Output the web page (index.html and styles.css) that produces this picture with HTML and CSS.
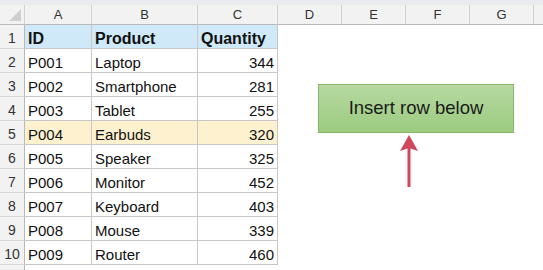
FILE: index.html
```html
<!DOCTYPE html>
<html>
<head>
<meta charset="utf-8">
<link rel="stylesheet" href="styles.css">
</head>
<body>
<div class="sheet">
  <div class="topstrip"></div>
  <div class="grid">
    <div class="ch corner"><span class="tri"></span></div>
    <div class="ch">A</div><div class="ch">B</div><div class="ch">C</div><div class="ch">D</div><div class="ch">E</div><div class="ch">F</div><div class="ch">G</div><div class="ch last"></div>

    <div class="rh">1</div><div class="c t hd b">ID</div><div class="c t hd b">Product</div><div class="c t hd b">Quantity</div><div class="c"></div><div class="c"></div><div class="c"></div><div class="c"></div><div class="c"></div>
    <div class="rh">2</div><div class="c t">P001</div><div class="c t">Laptop</div><div class="c t n">344</div><div class="c"></div><div class="c"></div><div class="c"></div><div class="c"></div><div class="c"></div>
    <div class="rh">3</div><div class="c t">P002</div><div class="c t">Smartphone</div><div class="c t n">281</div><div class="c"></div><div class="c"></div><div class="c"></div><div class="c"></div><div class="c"></div>
    <div class="rh">4</div><div class="c t">P003</div><div class="c t">Tablet</div><div class="c t n">255</div><div class="c"></div><div class="c"></div><div class="c"></div><div class="c"></div><div class="c"></div>
    <div class="rh">5</div><div class="c t hl">P004</div><div class="c t hl">Earbuds</div><div class="c t n hl">320</div><div class="c"></div><div class="c"></div><div class="c"></div><div class="c"></div><div class="c"></div>
    <div class="rh">6</div><div class="c t">P005</div><div class="c t">Speaker</div><div class="c t n">325</div><div class="c"></div><div class="c"></div><div class="c"></div><div class="c"></div><div class="c"></div>
    <div class="rh">7</div><div class="c t">P006</div><div class="c t">Monitor</div><div class="c t n">452</div><div class="c"></div><div class="c"></div><div class="c"></div><div class="c"></div><div class="c"></div>
    <div class="rh">8</div><div class="c t">P007</div><div class="c t">Keyboard</div><div class="c t n">403</div><div class="c"></div><div class="c"></div><div class="c"></div><div class="c"></div><div class="c"></div>
    <div class="rh">9</div><div class="c t">P008</div><div class="c t">Mouse</div><div class="c t n">339</div><div class="c"></div><div class="c"></div><div class="c"></div><div class="c"></div><div class="c"></div>
    <div class="rh">10</div><div class="c t">P009</div><div class="c t">Router</div><div class="c t n">460</div><div class="c"></div><div class="c"></div><div class="c"></div><div class="c"></div><div class="c"></div>
    <div class="rh"></div><div class="c"></div><div class="c"></div><div class="c"></div><div class="c"></div><div class="c"></div><div class="c"></div><div class="c"></div><div class="c"></div>
  </div>
  <div class="button">Insert row below</div>
  <svg class="arrow" width="22" height="54" viewBox="0 0 22 54">
    <polygon points="11,0 20,16 11,13 2,16" fill="#d0475b"/>
    <rect x="9.5" y="12" width="3" height="40" fill="#d0475b"/>
  </svg>
</div>
</body>
</html>
```
FILE: styles.css
```css
html, body {
  margin: 0;
  padding: 0;
  background: #ffffff;
}
body {
  font-family: "Liberation Sans", Arial, sans-serif;
  width: 543px;
  height: 270px;
  overflow: hidden;
}
.sheet {
  position: relative;
  width: 543px;
  height: 270px;
  overflow: hidden;
}
.topstrip {
  height: 5px;
  background: #e9ebee;
}
.grid {
  display: grid;
  grid-template-columns: 25px 67px 106px 80px 64px 64px 64px 64px 30px;
  grid-template-rows: 20px repeat(11, 24px);
}
.ch {
  background: #f2f2f2;
  border-right: 1px solid #d2d2d2;
  border-bottom: 1px solid #b8b8b8;
  box-sizing: border-box;
  font-size: 13px;
  color: #333;
  display: flex;
  align-items: center;
  justify-content: center;
}
.ch.last {
  border-right: none;
}
.corner {
  position: relative;
  background: #f2f2f2;
}
.tri {
  position: absolute;
  right: 3px;
  bottom: 3px;
  width: 0;
  height: 0;
  border-left: 12px solid transparent;
  border-bottom: 12px solid #cfcfcf;
}
.rh {
  background: #f2f2f2;
  border-right: 1px solid #b8b8b8;
  border-bottom: 1px solid #d6d6d6;
  box-sizing: border-box;
  font-size: 14px;
  color: #333;
  display: flex;
  align-items: flex-end;
  justify-content: center;
  padding-bottom: 1px;
  line-height: 17px;
}
.c {
  box-sizing: border-box;
  background: #fff;
}
.t {
  border-right: 1px solid #c8c8c8;
  border-bottom: 1px solid #c8c8c8;
  font-size: 15px;
  color: #111;
  display: flex;
  align-items: flex-end;
  padding: 0 3px 0 3px;
  line-height: 18px;
  white-space: nowrap;
}
.n {
  justify-content: flex-end;
}
.hd {
  background: #cfe9f9;
}
.b {
  font-weight: bold;
  font-size: 16px;
  padding-bottom: 0;
}
.hl {
  background: #fdf1cf;
}
.button {
  position: absolute;
  left: 318px;
  top: 84px;
  width: 196px;
  height: 49px;
  box-sizing: border-box;
  border: 1px solid #86b86a;
  background: linear-gradient(#b6d9a1, #9ccb80);
  display: flex;
  align-items: center;
  justify-content: center;
  font-size: 18.5px;
  color: #1a1a1a;
  padding-bottom: 1px;
}
.arrow {
  position: absolute;
  left: 398px;
  top: 135px;
}
```
